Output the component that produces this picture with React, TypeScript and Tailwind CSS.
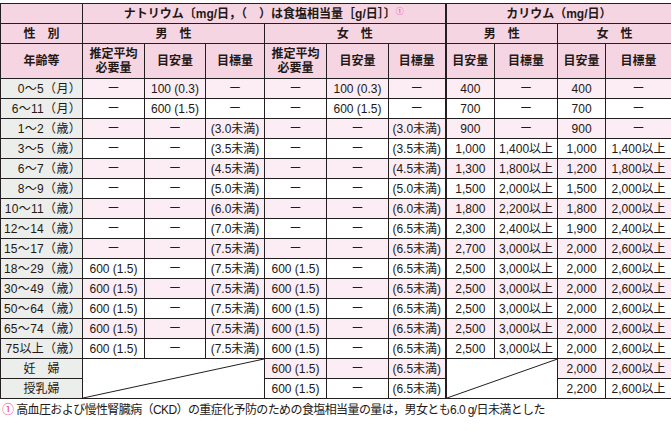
import React from "react";

const B = "border border-[#231f20]";
const HEAD = "bg-[#f6d5e3]";
const PINK = "bg-[#fcecf3]";
const GRAY = "bg-[#eceeeb]";
const THICK = "border-l-2";

type Row = { age: string; na: string[]; k: string[] };

const D = "ー";
const rows: Row[] = [
  { age: "0～5（月）", na: [D, "100 (0.3)", D, D, "100 (0.3)", D], k: ["400", D, "400", D] },
  { age: "6～11（月）", na: [D, "600 (1.5)", D, D, "600 (1.5)", D], k: ["700", D, "700", D] },
  { age: "1～2（歳）", na: [D, D, "(3.0未満)", D, D, "(3.0未満)"], k: ["900", D, "900", D] },
  { age: "3～5（歳）", na: [D, D, "(3.5未満)", D, D, "(3.5未満)"], k: ["1,000", "1,400以上", "1,000", "1,400以上"] },
  { age: "6～7（歳）", na: [D, D, "(4.5未満)", D, D, "(4.5未満)"], k: ["1,300", "1,800以上", "1,200", "1,800以上"] },
  { age: "8～9（歳）", na: [D, D, "(5.0未満)", D, D, "(5.0未満)"], k: ["1,500", "2,000以上", "1,500", "2,000以上"] },
  { age: "10～11（歳）", na: [D, D, "(6.0未満)", D, D, "(6.0未満)"], k: ["1,800", "2,200以上", "1,800", "2,000以上"] },
  { age: "12～14（歳）", na: [D, D, "(7.0未満)", D, D, "(6.5未満)"], k: ["2,300", "2,400以上", "1,900", "2,400以上"] },
  { age: "15～17（歳）", na: [D, D, "(7.5未満)", D, D, "(6.5未満)"], k: ["2,700", "3,000以上", "2,000", "2,600以上"] },
  { age: "18～29（歳）", na: ["600 (1.5)", D, "(7.5未満)", "600 (1.5)", D, "(6.5未満)"], k: ["2,500", "3,000以上", "2,000", "2,600以上"] },
  { age: "30～49（歳）", na: ["600 (1.5)", D, "(7.5未満)", "600 (1.5)", D, "(6.5未満)"], k: ["2,500", "3,000以上", "2,000", "2,600以上"] },
  { age: "50～64（歳）", na: ["600 (1.5)", D, "(7.5未満)", "600 (1.5)", D, "(6.5未満)"], k: ["2,500", "3,000以上", "2,000", "2,600以上"] },
  { age: "65～74（歳）", na: ["600 (1.5)", D, "(7.5未満)", "600 (1.5)", D, "(6.5未満)"], k: ["2,500", "3,000以上", "2,000", "2,600以上"] },
  { age: "75以上（歳）", na: ["600 (1.5)", D, "(7.5未満)", "600 (1.5)", D, "(6.5未満)"], k: ["2,500", "3,000以上", "2,000", "2,600以上"] },
];

function Diagonal() {
  return (
    <svg className="absolute inset-0 w-full h-full" viewBox="0 0 100 100" preserveAspectRatio="none">
      <line x1="0" y1="100" x2="100" y2="0" stroke="#231f20" strokeWidth="1" vectorEffect="non-scaling-stroke" />
    </svg>
  );
}

function TwoLine() {
  return (
    <div className="flex flex-col items-center">
      <span className="block h-[14px] leading-[14px]">推定平均</span>
      <span className="block h-[14px] leading-[14px]">必要量</span>
    </div>
  );
}

export default function App() {
  const cell = `${B} p-0 text-center align-middle whitespace-nowrap`;
  const hcell = `${cell} ${HEAD} font-bold`;
  const age = `${B} ${GRAY} p-0 pr-[1px] text-right whitespace-nowrap tracking-[0.3px]`;
  return (
    <div
      className="w-[671px] h-[431px] bg-white text-[#231815] pt-[3px]"
      style={{ fontFamily: '"Liberation Sans", "Noto Sans CJK JP", sans-serif' }}
    >
      <table className="w-[671px] table-fixed border-collapse text-[12px] leading-none">
        <colgroup>
          <col className="w-[82px]" />
          <col className="w-[62px]" />
          <col className="w-[61px]" />
          <col className="w-[59px]" />
          <col className="w-[62px]" />
          <col className="w-[62px]" />
          <col className="w-[57px]" />
          <col className="w-[49px]" />
          <col className="w-[63px]" />
          <col className="w-[48px]" />
          <col className="w-[66px]" />
        </colgroup>
        <thead>
          <tr className="h-[20px]">
            <th className={hcell}></th>
            <th className={hcell} colSpan={6}>
              ナトリウム〔mg/日，（　）は食塩相当量［g/日］〕
              <sup className="text-[#e8418b] text-[8px] font-normal">①</sup>
            </th>
            <th className={`${hcell} ${THICK}`} colSpan={4}>カリウム（mg/日）</th>
          </tr>
          <tr className="h-[20px]">
            <th className={hcell}>性　別</th>
            <th className={hcell} colSpan={3}>男　性</th>
            <th className={hcell} colSpan={3}>女　性</th>
            <th className={`${hcell} ${THICK}`} colSpan={2}>男　性</th>
            <th className={hcell} colSpan={2}>女　性</th>
          </tr>
          <tr className="h-[35px]">
            <th className={hcell}>年齢等</th>
            <th className={hcell}><TwoLine /></th>
            <th className={hcell}>目安量</th>
            <th className={hcell}>目標量</th>
            <th className={hcell}><TwoLine /></th>
            <th className={hcell}>目安量</th>
            <th className={hcell}>目標量</th>
            <th className={`${hcell} ${THICK}`}>目安量</th>
            <th className={hcell}>目標量</th>
            <th className={hcell}>目安量</th>
            <th className={hcell}>目標量</th>
          </tr>
        </thead>
        <tbody>
          {rows.map((r, i) => {
            const bg = i % 2 === 0 ? PINK : "bg-white";
            return (
              <tr key={i} className="h-[20px]">
                <td className={age}>{r.age}</td>
                {r.na.map((v, j) => (
                  <td key={j} className={`${cell} ${bg}`}>{v}</td>
                ))}
                {r.k.map((v, j) => (
                  <td key={j} className={`${cell} ${bg} ${j === 0 ? THICK : ""}`}>{v}</td>
                ))}
              </tr>
            );
          })}
          <tr className="h-[20px]">
            <td className={`${B} ${GRAY} p-0 text-center`}>妊　婦</td>
            <td className={`${B} bg-white p-0 relative`} colSpan={3} rowSpan={2}>
              <Diagonal />
            </td>
            <td className={`${cell} ${PINK}`}>600 (1.5)</td>
            <td className={`${cell} ${PINK}`}>{D}</td>
            <td className={`${cell} ${PINK}`}>(6.5未満)</td>
            <td className={`${B} ${THICK} bg-white p-0 relative`} colSpan={2} rowSpan={2}>
              <Diagonal />
            </td>
            <td className={`${cell} ${PINK}`}>2,000</td>
            <td className={`${cell} ${PINK}`}>2,600以上</td>
          </tr>
          <tr className="h-[20px]">
            <td className={`${B} ${GRAY} p-0 text-center`}>授乳婦</td>
            <td className={`${cell} bg-white`}>600 (1.5)</td>
            <td className={`${cell} bg-white`}>{D}</td>
            <td className={`${cell} bg-white`}>(6.5未満)</td>
            <td className={`${cell} bg-white`}>2,200</td>
            <td className={`${cell} bg-white`}>2,600以上</td>
          </tr>
        </tbody>
      </table>
      <div className="mt-[3px] pl-[2px] text-[12px] leading-[16px] whitespace-nowrap tracking-[-0.6px]">
        <span className="text-[#e8418b]">①</span> 高血圧および慢性腎臓病（CKD）の重症化予防のための食塩相当量の量は，男女とも6.0 g/日未満とした
      </div>
    </div>
  );
}
